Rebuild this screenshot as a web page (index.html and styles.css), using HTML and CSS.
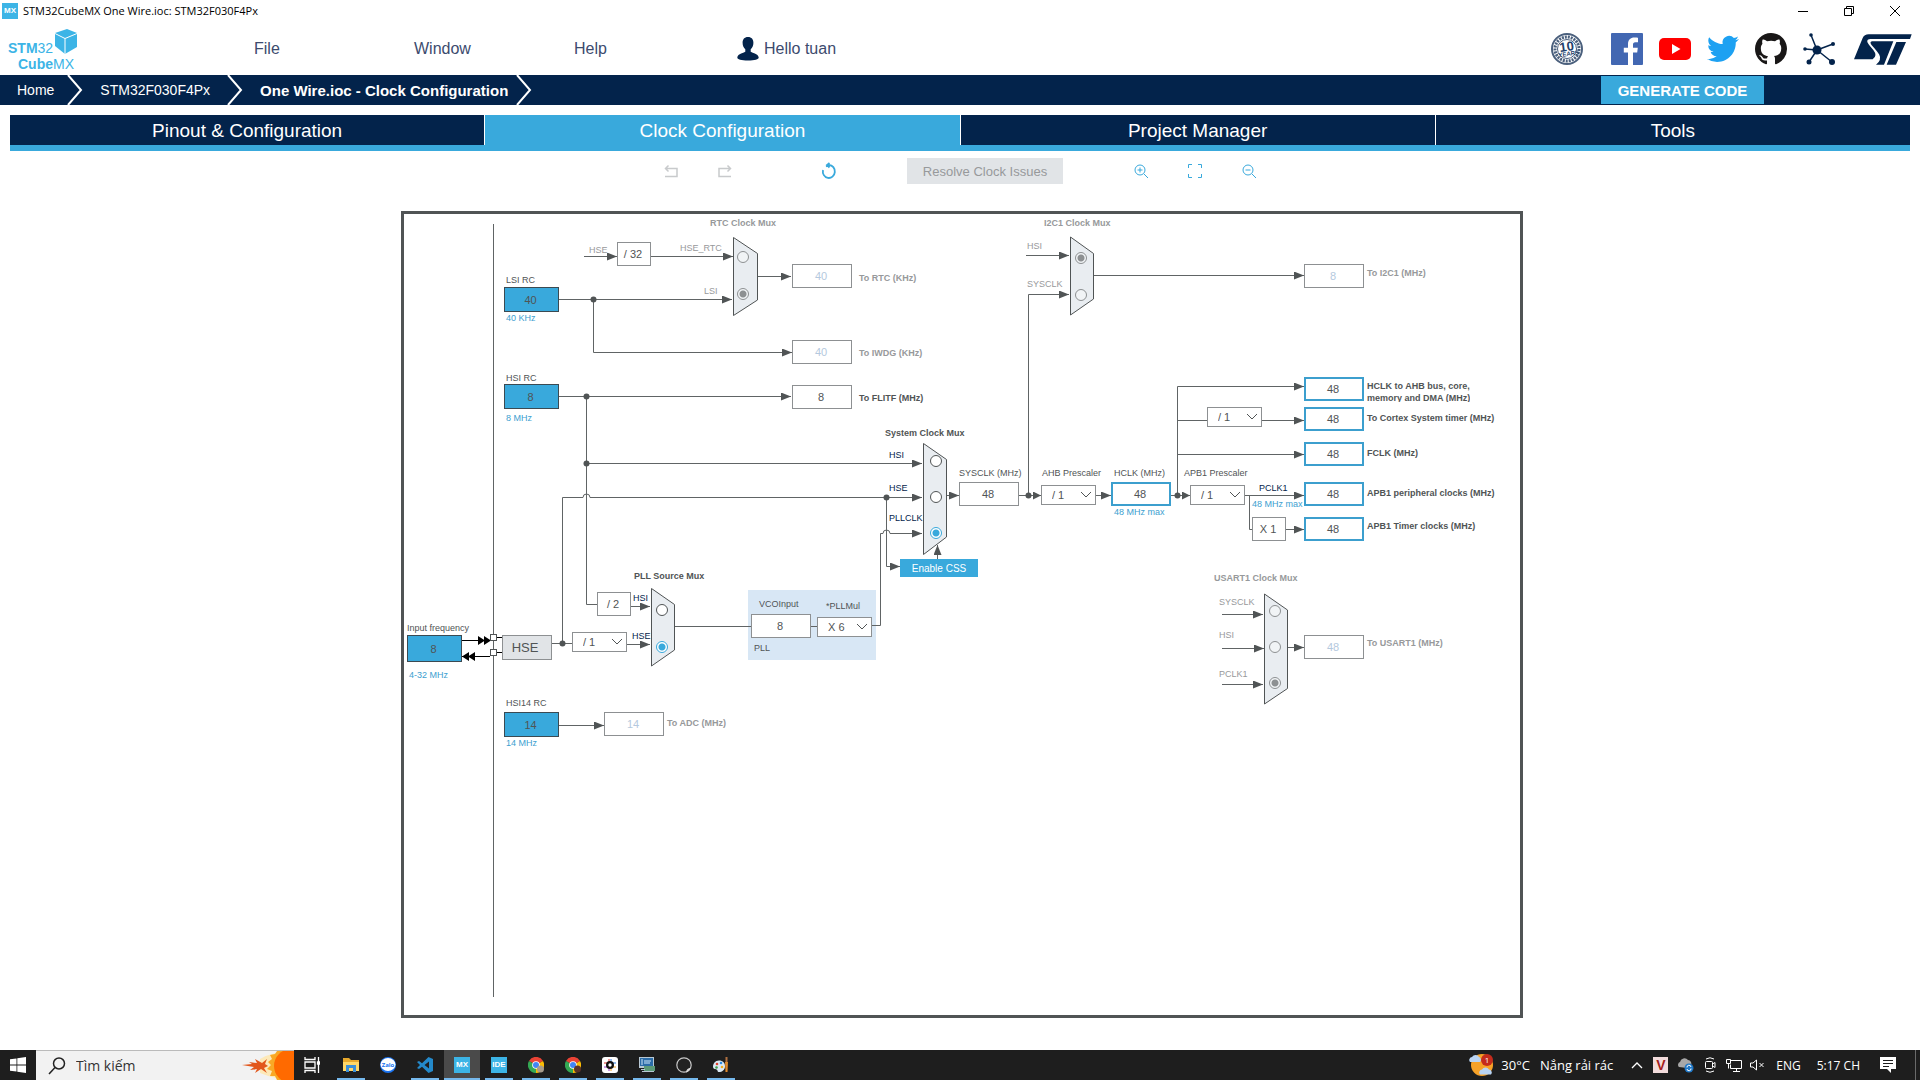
FILE: index.html
```html
<!DOCTYPE html>
<html lang="en">
<head>
<meta charset="utf-8">
<meta name="viewport" content="width=device-width, initial-scale=1">
<title>STM32CubeMX One Wire.ioc: STM32F030F4Px</title>
<link rel="stylesheet" href="styles.css">
</head>
<body>
<div class="titlebar">
  <span class="mx-badge">MX</span>
  <span class="window-name">STM32CubeMX One Wire.ioc: STM32F030F4Px</span>
  <div class="window-controls">
    <button aria-label="Minimize"><svg width="12" height="12" viewBox="0 0 12 12"><path d="M1 6.500H11"/></svg></button>
    <button aria-label="Restore"><svg width="12" height="12" viewBox="0 0 12 12"><path d="M1.500 3.500h7v7h-7zM3.500 3.500v-2h7v7h-2"/></svg></button>
    <button aria-label="Close"><svg width="12" height="12" viewBox="0 0 12 12"><path d="M1 1l10 10M11 1L1 11"/></svg></button>
  </div>
</div>

<header class="header">
  <div class="logo" aria-label="STM32 CubeMX">
    <span class="logo-top"><b>STM</b>32</span>
    <span class="logo-bottom"><b>Cube</b>MX</span>
    <svg class="logo-cube" width="24" height="26" viewBox="0 0 24 26"><path fill="#3cb4e6" d="M13 0l10 4v14L11 25 1 17V4z"/><path fill="none" stroke="#fff" d="M1 4.500l10 5 12-5M11 9.500V25"/></svg>
  </div>
  <nav class="menu">
    <a href="#file">File</a>
    <a href="#window">Window</a>
    <a href="#help">Help</a>
    <a href="#account" class="account"><svg width="22" height="24" viewBox="0 0 22 24"><path fill="#03234b" d="M11 0c3.600 0 5.400 2.400 5.400 5.800 0 2.700-1 5-2.700 6.500v2.400c.6 1 7.800 1.600 8 5.800 0 2-4 3-10.700 3S.3 22.500.3 20.500c.2-4.200 7.400-4.800 8-5.800v-2.400C6.600 10.800 5.600 8.500 5.600 5.800 5.600 2.400 7.400 0 11 0z"/></svg>Hello tuan</a>
  </nav>
  <div class="links">
    <a href="#longevity" class="badge-link" aria-label="10 years longevity commitment"><svg width="32" height="32" viewBox="0 0 32 32"><circle cx="16" cy="16" r="15" fill="#fff" stroke="#4b607d" stroke-width="2"/><circle cx="16" cy="16" r="12" fill="none" stroke="#4b607d" stroke-width="3" stroke-dasharray="2 1"/><circle cx="16" cy="16" r="9.500" fill="#fff" stroke="#4b607d"/><text x="16" y="18" text-anchor="middle" font-size="13" font-weight="bold" fill="#23406a" transform="rotate(-8 16 16)">10</text><text x="17" y="23" text-anchor="middle" font-size="6" font-weight="bold" fill="#23406a" transform="rotate(-8 16 16)">YEARS</text></svg></a>
    <a href="#facebook" aria-label="Facebook"><svg width="32" height="32" viewBox="0 0 32 32"><rect width="32" height="32" rx="1" fill="#4267b2"/><path fill="#fff" d="M22 32V19.600h4.200l.6-4.900H22v-3.100c0-1.400.4-2.400 2.400-2.400H27V4.800c-.5-.1-2-.2-3.700-.2-3.700 0-6.300 2.300-6.300 6.500v3.600h-4.200v4.900H17V32z"/></svg></a>
    <a href="#youtube" aria-label="YouTube"><svg width="32" height="32" viewBox="0 0 32 32"><rect y="5" width="32" height="22" rx="5" fill="#f00"/><path fill="#fff" d="M13 11l8.500 5-8.500 5z"/></svg></a>
    <a href="#twitter" aria-label="Twitter"><svg width="32" height="32" viewBox="0 0 24 24"><path fill="#1da1f2" d="M23.953 4.570a10 10 0 01-2.825.775 4.958 4.958 0 002.163-2.723c-.951.555-2.005.959-3.127 1.184a4.920 4.920 0 00-8.384 4.482C7.690 8.095 4.067 6.130 1.640 3.162a4.822 4.822 0 00-.666 2.475c0 1.710.870 3.213 2.188 4.096a4.904 4.904 0 01-2.228-.616v.060a4.923 4.923 0 003.946 4.827 4.996 4.996 0 01-2.212.085 4.936 4.936 0 004.604 3.417 9.867 9.867 0 01-6.102 2.105c-.390 0-.779-.023-1.170-.067a13.995 13.995 0 007.557 2.209c9.053 0 13.998-7.496 13.998-13.985 0-.210 0-.420-.015-.630A9.935 9.935 0 0024 4.590z"/></svg></a>
    <a href="#github" aria-label="GitHub"><svg width="32" height="32" viewBox="0 0 16 16"><path fill="#191717" d="M8 0C3.580 0 0 3.580 0 8c0 3.540 2.290 6.530 5.470 7.590.4.070.55-.17.55-.38 0-.19-.01-.82-.01-1.490-2.010.37-2.530-.49-2.690-.94-.09-.23-.48-.94-.82-1.130-.28-.15-.68-.52-.01-.53.63-.01 1.080.58 1.230.82.72 1.210 1.870.87 2.330.66.070-.52.28-.87.51-1.070-1.780-.2-3.640-.89-3.640-3.950 0-.87.310-1.590.82-2.150-.08-.2-.36-1.020.08-2.120 0 0 .67-.21 2.200.82.64-.18 1.320-.27 2-.27.68 0 1.360.09 2 .27 1.530-1.040 2.200-.82 2.200-.82.44 1.100.16 1.920.08 2.120.51.56.82 1.270.82 2.150 0 3.070-1.870 3.750-3.650 3.950.29.25.54.73.54 1.480 0 1.070-.01 1.930-.01 2.200 0 .21.15.46.55.38A8.013 8.013 0 0016 8c0-4.420-3.580-8-8-8z"/></svg></a>
    <a href="#community" aria-label="Community"><svg width="32" height="32" viewBox="0 0 32 32"><g stroke="#03234b" stroke-width="1.500"><path d="M14 17L8 2M14 17l16-6M14 17L2 16M14 17L6 29M14 17l15 12"/></g><g fill="#03234b"><circle cx="14" cy="17" r="4.500"/><circle cx="8" cy="2" r="1.800"/><circle cx="30" cy="11" r="2"/><circle cx="2" cy="16" r="1.800"/><circle cx="6" cy="29" r="2.500"/><circle cx="29" cy="29" r="3"/></g></svg></a>
    <a href="#st" class="st" aria-label="STMicroelectronics"><svg width="58" height="31" viewBox="0 0 174 93"><path fill="#03234b" d="M0 76L26 12Q31 1 44 1H173L168 15H50Q38 15 40 24Q42 30 58 48Q72 66 56 76ZM54 22H118L90 92H66Q84 78 76 62Q70 52 52 32Q46 24 54 22ZM127 24H156L126 92H98Z"/></svg></a>
  </div>
</header>

<div class="crumbs">
  <a href="#home" class="crumb">Home</a>
  <svg class="sep" width="16" height="30" viewBox="0 0 16 30"><path d="M1 0l13 15L1 30"/></svg>
  <a href="#mcu" class="crumb crumb-mcu">STM32F030F4Px</a>
  <svg class="sep sep-mcu" width="16" height="30" viewBox="0 0 16 30"><path d="M1 0l13 15L1 30"/></svg>
  <a href="#clock" class="crumb crumb-current">One Wire.ioc - Clock Configuration</a>
  <svg class="sep sep-current" width="16" height="30" viewBox="0 0 16 30"><path d="M1 0l13 15L1 30"/></svg>
  <button class="generate">GENERATE CODE</button>
</div>

<nav class="tabs">
  <a href="#pinout">Pinout &amp; Configuration</a>
  <a href="#clock" class="active">Clock Configuration</a>
  <a href="#project">Project Manager</a>
  <a href="#tools">Tools</a>
</nav>

<div class="toolbar">
  <button class="tool off" aria-label="Undo"><svg width="14" height="14" viewBox="0 0 14 14"><path stroke-width="1.500" d="M1 12.500h12v-8H2M4.500 1.500l-3 3 3 3"/></svg></button>
  <button class="tool off redo" aria-label="Redo"><svg width="14" height="14" viewBox="0 0 14 14"><path stroke-width="1.500" d="M13 12.500H1v-8h11M9.500 1.500l3 3-3 3"/></svg></button>
  <button class="tool" aria-label="Reset"><svg width="14" height="16" viewBox="0 0 14 16"><path stroke-width="1.800" d="M1 7a6 6.500 0 1 0 6-5L4 3.500M7.500 0L5 2l2.500 2.500"/></svg></button>
  <button class="resolve">Resolve Clock Issues</button>
  <button class="tool" aria-label="Zoom in"><svg width="14" height="14" viewBox="0 0 14 14"><circle cx="6" cy="6" r="5"/><path d="M10 10l4 4M3.500 6h5M6 3.500v5"/></svg></button>
  <button class="tool" aria-label="Fit to window"><svg width="14" height="14" viewBox="0 0 14 14"><path d="M.5 4V.5H4M10 .5h3.500V4M13.500 10v3.500H10M4 13.500H.5V10"/></svg></button>
  <button class="tool" aria-label="Zoom out"><svg width="14" height="14" viewBox="0 0 14 14"><circle cx="6" cy="6" r="5"/><path d="M10 10l4 4M3.500 6h5"/></svg></button>
</div>

<main class="stage">
<div class="board">
  <svg class="wires" width="1124" height="810" viewBox="0 0 1124 810">
    <defs>
      <marker id="tip" markerUnits="userSpaceOnUse" markerWidth="10" markerHeight="8" refX="10" refY="4" orient="auto"><path d="M0 0l10 4-10 4z" fill="#505455"/></marker>
      <marker id="tip-short" markerUnits="userSpaceOnUse" markerWidth="8" markerHeight="8" refX="8" refY="4" orient="auto"><path d="M0 0l8 4-8 4z" fill="#505455"/></marker>
    </defs>
    <rect x="2.500" y="2.500" width="1119" height="804" fill="none" stroke="#505455" stroke-width="3"/>
    <rect x="348" y="380" width="128" height="70" fill="#d8e7f5"/>
    <g class="wire">
      <path d="M93.500 14V787"/>
      <path class="arrow" d="M184 46.500H217"/>
      <path class="arrow" d="M251 46.500H333"/>
      <path class="arrow" d="M159 89.500H332"/>
      <path class="arrow" d="M193.500 89.500V142.500H392"/>
      <path class="arrow" d="M357 66.500H391"/>
      <path class="arrow" d="M159 186.500H391"/>
      <path class="arrow" d="M186.500 253.500H522"/>
      <path d="M186.500 186V394.500H197"/>
      <path class="arrow" d="M162.500 433.500V287.500H183a3 3 0 0 1 7 0H522"/>
      <path class="arrow" d="M486.500 287.500V356.500H500"/>
      <path class="arrow" d="M472 415.500H480.500V323.500H483a3 3 0 0 1 7 0H522"/>
      <path class="arrow" d="M537.500 349V335"/>
      <path class="arrow" d="M547 285.500H559"/>
      <path class="arrow short" d="M619 285.500H641"/>
      <path class="arrow" d="M628.500 285V84.500H669"/>
      <path class="arrow" d="M626 45.500H669"/>
      <path class="arrow" d="M693 65.500H904"/>
      <path class="arrow" d="M696 285.500H711"/>
      <path class="arrow short" d="M771 285.500H790"/>
      <path class="arrow" d="M777.500 285V176.500H904"/>
      <path class="arrow" d="M777 210.500H904"/>
      <path class="arrow" d="M777 244.500H904"/>
      <path class="arrow" d="M845 285.500H904"/>
      <path d="M849.500 285V319.500H852"/>
      <path class="arrow" d="M886 319.500H904"/>
      <path class="arrow" d="M822 404.500H863"/>
      <path class="arrow" d="M822 438.500H864"/>
      <path class="arrow" d="M822 474.500H863"/>
      <path class="arrow" d="M888 437.500H904"/>
      <path class="arrow" d="M231 396.500H250"/>
      <path class="arrow" d="M227 434.500H250"/>
      <path d="M152 433.500H172"/>
      <path d="M275 416.500H351M411 416.500H417"/>
      <path class="arrow" d="M159 515.500H204"/>
    </g>
    <g fill="none" stroke="#000"><path d="M62 430.500H90M62 446.500H90M97 427.500H102M97 442.500H102"/></g>
    <path fill="#000" d="M78 426l7 4.500-7 4.500zM84 426l7 4.500-7 4.500zM75 442l-7 4.500 7 4.500zM69 442l-7 4.500 7 4.500z"/>
    <g fill="#fff" stroke="#505455"><rect x="90.500" y="424.500" width="6" height="6"/><rect x="90.500" y="439.500" width="6" height="6"/></g>
    <g fill="#505455">
      <circle cx="193.500" cy="89.500" r="3"/><circle cx="186.500" cy="186.500" r="3"/><circle cx="186.500" cy="253.500" r="3"/><circle cx="486.500" cy="287.500" r="3"/><circle cx="628.500" cy="285.500" r="3"/><circle cx="777.500" cy="285.500" r="3"/><circle cx="162.500" cy="433.500" r="3"/>
    </g>
    <g fill="#e9edf1" stroke="#505455">
      <path d="M333.500 27.500L357.500 43.500V90L333.500 105.500z"/>
      <path d="M670.500 27L693.500 43.500V89L670.500 105z"/>
      <path d="M523.500 233.500L546.500 249.500V327L523.500 344.500z"/>
      <path d="M251.500 378.500L274.500 394.500V440L251.500 456z"/>
      <path d="M864.500 384L887.500 400V478.500L864.500 494z"/>
    </g>
  </svg>

  <h2 class="lbl head mute at-rtc-title">RTC Clock Mux</h2>
  <span class="lbl mute at-rtc-hse0">HSE</span>
  <output class="box div32">/ 32</output>
  <label class="lbl mute at-rtc-hse" for="rtc1">HSE_RTC</label>
  <label class="lbl mute at-rtc-lsi" for="rtc2">LSI</label>
  <div class="mux mux2 off at-rtc-mux"><input type="radio" name="rtc" id="rtc1"><input type="radio" name="rtc" id="rtc2" checked></div>
  <input class="box out none at-rtc" id="rtc" value="40" readonly><label class="lbl head mute at-rtc-l" for="rtc">To RTC (KHz)</label>

  <label class="lbl at-lsi-l" for="lsi">LSI RC</label><input class="box src at-lsi" id="lsi" value="40" readonly><span class="lbl hint at-lsi-h">40 KHz</span>
  <input class="box out none at-iwdg" id="iwdg" value="40" readonly><label class="lbl head mute at-iwdg-l" for="iwdg">To IWDG (KHz)</label>
  <label class="lbl at-hsi-l" for="hsi">HSI RC</label><input class="box src at-hsi" id="hsi" value="8" readonly><span class="lbl hint at-hsi-h">8 MHz</span>
  <input class="box out at-flitf" id="flitf" value="8" readonly><label class="lbl head at-flitf-l" for="flitf">To FLITF (MHz)</label>

  <h2 class="lbl head at-sys-title">System Clock Mux</h2>
  <label class="lbl navy at-sys-hsi" for="sys1">HSI</label>
  <label class="lbl navy at-sys-hse" for="sys2">HSE</label>
  <label class="lbl navy at-sys-pll" for="sys3">PLLCLK</label>
  <div class="mux mux3 at-sys-mux"><input type="radio" name="sys" id="sys1"><input type="radio" name="sys" id="sys2"><input type="radio" name="sys" id="sys3" checked></div>
  <button class="css-btn">Enable CSS</button>
  <label class="lbl at-sysclk-l" for="sysclk">SYSCLK (MHz)</label><input class="box out at-sysclk" id="sysclk" value="48" readonly>
  <label class="lbl at-ahb-l" for="ahb">AHB Prescaler</label><select class="pick at-ahb" id="ahb"><option>/ 1</option></select>
  <label class="lbl at-hclk-l" for="hclk">HCLK (MHz)</label><input class="box out edit at-hclk" id="hclk" value="48"><span class="lbl hint at-hclk-h">48 MHz max</span>
  <label class="lbl at-apb-l" for="apb">APB1 Prescaler</label><select class="pick at-apb" id="apb"><option>/ 1</option></select>
  <span class="lbl navy at-pclk">PCLK1</span><span class="lbl hint at-pclk-h">48 MHz max</span>
  <output class="box mul1">X 1</output>

  <input class="box out edit at-o1" id="o1" value="48"><label class="lbl head two at-o1-l" for="o1">HCLK to AHB bus, core,<br>memory and DMA (MHz)</label>
  <select class="pick at-cortex" aria-label="Cortex prescaler"><option>/ 1</option></select>
  <input class="box out edit at-o2" id="o2" value="48"><label class="lbl head at-o2-l" for="o2">To Cortex System timer (MHz)</label>
  <input class="box out edit at-o3" id="o3" value="48"><label class="lbl head at-o3-l" for="o3">FCLK (MHz)</label>
  <input class="box out edit at-o4" id="o4" value="48"><label class="lbl head at-o4-l" for="o4">APB1 peripheral clocks (MHz)</label>
  <input class="box out edit at-o5" id="o5" value="48"><label class="lbl head at-o5-l" for="o5">APB1 Timer clocks (MHz)</label>

  <h2 class="lbl head mute at-i2c-title">I2C1 Clock Mux</h2>
  <label class="lbl mute at-i2c-hsi" for="i2c1">HSI</label>
  <label class="lbl mute at-i2c-sys" for="i2c2">SYSCLK</label>
  <div class="mux mux2 off at-i2c-mux"><input type="radio" name="i2c" id="i2c1" checked><input type="radio" name="i2c" id="i2c2"></div>
  <input class="box out none at-i2c" id="i2c" value="8" readonly><label class="lbl head mute at-i2c-l" for="i2c">To I2C1 (MHz)</label>

  <h2 class="lbl head mute at-us-title">USART1 Clock Mux</h2>
  <label class="lbl mute at-us-sys" for="us1">SYSCLK</label>
  <label class="lbl mute at-us-hsi" for="us2">HSI</label>
  <label class="lbl mute at-us-pclk" for="us3">PCLK1</label>
  <div class="mux mux3 off at-us-mux"><input type="radio" name="us" id="us1"><input type="radio" name="us" id="us2"><input type="radio" name="us" id="us3" checked></div>
  <input class="box out none at-us" id="us" value="48" readonly><label class="lbl head mute at-us-l" for="us">To USART1 (MHz)</label>

  <h2 class="lbl head at-pll-title">PLL Source Mux</h2>
  <output class="box div2">/ 2</output>
  <label class="lbl navy at-pll-hsi" for="pll1">HSI</label>
  <label class="lbl navy at-pll-hse" for="pll2">HSE</label>
  <select class="pick at-prediv" aria-label="HSE divider"><option>/ 1</option></select>
  <div class="mux mux2 at-pll-mux"><input type="radio" name="pll" id="pll1"><input type="radio" name="pll" id="pll2" checked></div>
  <label class="lbl at-vco-l" for="vco">VCOInput</label><input class="box out at-vco" id="vco" value="8" readonly>
  <label class="lbl at-mul-l" for="mul">*PLLMul</label><select class="pick at-mul" id="mul"><option>X 6</option></select>
  <span class="lbl at-pll">PLL</span>

  <label class="lbl at-in-l" for="inp">Input frequency</label><input class="box src in" id="inp" value="8"><span class="lbl hint at-in-h">4-32 MHz</span>
  <button class="hse">HSE</button>
  <label class="lbl at-h14-l" for="h14">HSI14 RC</label><input class="box src at-h14" id="h14" value="14" readonly><span class="lbl hint at-h14-h">14 MHz</span>
  <input class="box out none at-adc" id="adc" value="14" readonly><label class="lbl head mute at-adc-l" for="adc">To ADC (MHz)</label>
</div>
</main>

<footer class="taskbar">
  <button class="start" aria-label="Start"><svg width="16" height="16" viewBox="0 0 16 16"><path fill="#fff" d="M0 2.300L6.500 1.400v6.200H0zM7.300 1.300L16 0v7.600H7.300zM0 8.400h6.500v6.200L0 13.700zM7.300 8.400H16V16l-8.700-1.300z"/></svg></button>
  <div class="search">
    <svg width="18" height="18" viewBox="0 0 18 18" fill="none" stroke="#222" stroke-width="1.500"><circle cx="11" cy="6.500" r="5.500"/><path d="M7 10.500L1 17"/></svg>
    <input type="text" placeholder="Tìm kiếm" aria-label="Tìm kiếm">
    <svg class="sun" width="54" height="29" viewBox="0 0 54 29"><path fill="#fde9b8" d="M20 8q14-8 34-8v29Q34 28 20 22z"/><path fill="#e2571c" d="M2 14l10-1-3-2 8 1-2-4 7 4 5-4-2 5 3 2-4 2 3 5-6-4-6 4 2-4-7 1 4-3z"/><path fill="#f9a825" d="M54 0H37l-2 3-5 1 2 4-4 3 3 3-4 4 5 2-2 5 5 0 2 4H54z"/><circle cx="51" cy="15" r="17" fill="#ff6a00"/></svg>
  </div>
  <div class="apps">
    <button class="app idle task-view" aria-label="Task view"><svg width="16" height="16" viewBox="0 0 16 16" fill="none" stroke="#fff" stroke-width="1.300"><path d="M1 0v2.500h10V0M1 16v-2.500h10V16M1 5h10v6H1zM14.500 0v16"/><path fill="#fff" d="M13.500 5h2v2h-2z"/></svg></button>
    <button class="app" aria-label="File Explorer"><svg width="16" height="16" viewBox="0 0 16 16"><path fill="#e8a92c" d="M0 1h6l2 2h8v11H0z"/><path fill="#ffd767" d="M0 5h16v9H0z"/><path fill="#3b8fd8" d="M3 8h10v7h-3v-4H6v4H3z"/></svg></button>
    <button class="app idle" aria-label="Zalo"><svg width="16" height="16" viewBox="0 0 16 16"><circle cx="8" cy="8" r="8" fill="#1a73f0"/><ellipse cx="8" cy="7.500" rx="7.500" ry="6.500" fill="#fff"/><text x="8" y="10" font-size="6" font-weight="bold" text-anchor="middle" fill="#1a73f0">Zalo</text></svg></button>
    <button class="app" aria-label="Visual Studio Code"><svg width="16" height="16" viewBox="0 0 16 16"><path fill="#2489ca" d="M11.500 0L16 2v12l-4.500 2L5 9.800 2 12l-2-1 3-3-3-3 2-1 3 2.200zM12 4.500L7.500 8 12 11.500z"/></svg></button>
    <button class="app current" aria-label="STM32CubeMX"><span class="tile">MX</span></button>
    <button class="app" aria-label="STM32CubeIDE"><span class="tile">IDE</span></button>
    <button class="app" aria-label="Chrome"><svg width="16" height="16" viewBox="0 0 16 16"><path fill="#ea4335" d="M8 8L1 4a8 8 0 0 1 14 0z"/><path fill="#34a853" d="M8 8v8A8 8 0 0 1 1 4z"/><path fill="#fbbc05" d="M8 8l7-4A8 8 0 0 1 8 16z"/><circle cx="8" cy="8" r="3.800" fill="#fff"/><circle cx="8" cy="8" r="3" fill="#4285f4"/><circle cx="12.500" cy="12" r="3.500" fill="#a89c8c"/></svg></button>
    <button class="app" aria-label="Chrome, second profile"><svg width="16" height="16" viewBox="0 0 16 16"><path fill="#ea4335" d="M8 8L1 4a8 8 0 0 1 14 0z"/><path fill="#34a853" d="M8 8v8A8 8 0 0 1 1 4z"/><path fill="#fbbc05" d="M8 8l7-4A8 8 0 0 1 8 16z"/><circle cx="8" cy="8" r="3.800" fill="#fff"/><circle cx="8" cy="8" r="3" fill="#4285f4"/><circle cx="12.500" cy="12" r="3.500" fill="#5a3328"/></svg></button>
    <button class="app" aria-label="Circuit designer"><svg width="16" height="16" viewBox="0 0 16 16"><rect width="16" height="16" rx="3" fill="#fff"/><path stroke="#e0312c" d="M2 6h3M7 2v3"/><path stroke="#2b7de0" d="M11 6h3M9 2v3"/><path stroke="#9a35c8" d="M2 10h3M7 11v3"/><path stroke="#f0a020" d="M11 10h3M9 11v3"/><circle cx="8" cy="8" r="4" fill="#111"/><circle cx="8" cy="8" r="1.700" fill="#fff"/></svg></button>
    <button class="app" aria-label="Device tool"><svg width="16" height="16" viewBox="0 0 16 16"><rect width="15" height="11" fill="#b8c8d4"/><rect x="1" y="1" width="13" height="8" fill="#2b6ca8"/><path stroke="#cfe6fa" d="M3 2v6M5 4h7M5 6h6"/><rect x="5" y="9" width="11" height="5" fill="#5c9a78"/><path stroke="#b8c8d4" d="M2 12.500h4M3 14.500h12"/></svg></button>
    <button class="app" aria-label="OBS"><svg width="16" height="16" viewBox="0 0 16 16"><circle cx="8" cy="8" r="7.200" fill="#222" stroke="#c8c8c8" stroke-width="1.200"/><path fill="#d8d8d8" d="M10 15.500q0-4 5-5-1 3.500-5 5z"/></svg></button>
    <button class="app" aria-label="Paint"><svg width="16" height="16" viewBox="0 0 16 16"><path fill="#dce9f4" d="M6 3.500c4 0 6 2.500 6 6s-3 5.500-6 5.500c-2 0-1-2-2.500-2.500S0 12 0 9.500s2-6 6-6z"/><circle cx="4" cy="7" r="1.300" fill="#e0432c"/><circle cx="8" cy="6" r="1.300" fill="#2c8be0"/><circle cx="9" cy="10" r="1.300" fill="#f0b020"/><circle cx="3.500" cy="10.500" r="1.300" fill="#3ea04a"/><path fill="#e08a2c" d="M12 5h3l-.5 10h-2z"/><path fill="#b07040" d="M12.500 0h2v5h-2z"/></svg></button>
  </div>
  <div class="tray">
    <button class="weather"><svg width="24" height="22" viewBox="0 0 24 22"><circle cx="13" cy="11" r="11" fill="#f7a228"/><path fill="#b9d3f2" d="M1 8a3 3 0 0 1 2-5 4 4 0 0 1 7 0 3 3 0 0 1 1 5zM11 20.500a3 3 0 0 1 2-5 4 4 0 0 1 7 0 3 3 0 0 1 2 5z"/><circle cx="18" cy="6" r="6" fill="#c42b1c"/><text x="18" y="9" font-size="8" text-anchor="middle" fill="#fff">1</text></svg><span>30°C</span><span>Nắng rải rác</span></button>
    <button class="caret" aria-label="Show hidden icons"><svg width="12" height="8" viewBox="0 0 12 8" fill="none" stroke="#fff" stroke-width="1.300"><path d="M1 7l5-5 5 5"/></svg></button>
    <span class="vkey">V</span>
    <svg width="17" height="16" viewBox="0 0 17 16"><path fill="#a8a8a8" d="M2 10a3 3 0 0 1 1-5 4.500 4.500 0 0 1 8-2 3.500 3.500 0 0 1 3 5l-4 3z"/><circle cx="12" cy="11" r="4.500" fill="#1f78c8"/><path d="M10 10.500a2 2 0 0 1 4-.5M14 11.500a2 2 0 0 1-4 .5" fill="none" stroke="#fff"/></svg>
    <svg class="cam" width="12" height="16" viewBox="0 0 12 16" fill="none" stroke="#fff"><rect x="1.500" y="4.500" width="7" height="7" rx="1"/><path d="M8.500 7l2.500-1.500v5L8.500 9M2 2q4-2.500 8 0M2 14q4 2.500 8 0"/></svg>
    <svg class="net" width="16" height="16" viewBox="0 0 16 16" fill="none" stroke="#fff"><path d="M4 3.500h11.500v8H4.500v-4M.5 2.500h4v4h-4zM2.500 6.500v5M7 14.500h7M10.500 12v2"/></svg>
    <svg width="15" height="14" viewBox="0 0 15 14" fill="none" stroke="#fff"><path d="M.5 5v4h2.500l3.500 3V2L3 5zM9.500 5l4 4M13.500 5l-4 4"/></svg>
    <span class="lang">ENG</span>
    <span class="clock">5:17 CH</span>
    <button class="notes" aria-label="Notifications"><svg width="16" height="16" viewBox="0 0 16 16"><path fill="#fff" d="M0 0h16v12h-5v4l-4-4H0z"/><path stroke="#1e1e1e" d="M3 3.500h10M3 6.500h10M3 9.500h6"/></svg></button>
  </div>
  <button class="show-desktop" aria-label="Show desktop"></button>
</footer>
</body>
</html>
```
FILE: styles.css
```css
* { box-sizing: border-box; }
body {
  margin: 0;
  min-height: 100vh;
  display: flex;
  flex-direction: column;
  background: #fff;
  color: #505455;
  font-family: "Liberation Sans", Arial, sans-serif;
}
a { color: inherit; text-decoration: none; }
button { border: 0; padding: 0; background: none; color: inherit; font-family: inherit; cursor: pointer; }
svg { display: block; flex: none; }

/* Window title */
.titlebar {
  display: flex;
  align-items: center;
  height: 22px;
  padding-left: 2px;
  color: #000;
  font: 11px/22px "Open Sans", "Noto Sans", sans-serif;
}
.mx-badge, .tile {
  width: 16px;
  height: 16px;
  background: #3cb4e6;
  color: #fff;
  font: bold 8px/16px "Liberation Sans", sans-serif;
  text-align: center;
}
.window-name { margin-left: 5px; }
.window-controls { display: flex; gap: 34px; margin-left: auto; padding-right: 19px; }
.window-controls svg { fill: none; stroke: #000; }

/* Main header */
.header { display: flex; align-items: center; height: 53px; padding: 1px 8px 0; }
.logo {
  position: relative;
  width: 246px;
  height: 46px;
  padding-top: 14px;
  color: #3cb4e6;
  font-size: 14px;
  line-height: 16px;
}
.logo-top, .logo-bottom { display: block; }
.logo-bottom { padding-left: 10px; }
.logo-cube { position: absolute; left: 46px; top: 3px; }
.menu { display: grid; grid-template-columns: repeat(4, 160px); align-items: center; color: #3c4b6e; font-size: 16px; }
.account { display: flex; align-items: center; gap: 5px; padding-left: 3px; }
.links { display: flex; align-items: center; gap: 16px; margin-left: auto; }
.badge-link { margin-right: 12px; }
.st { padding-left: 3px; }

/* Breadcrumbs */
.crumbs { display: flex; align-items: center; height: 30px; padding-left: 17px; background: #03234b; color: #fff; font-size: 14px; }
.sep { fill: none; stroke: #fff; stroke-width: 2; margin-left: 13px; }
.sep-mcu { margin-left: 17px; }
.sep-current { margin-left: 8px; }
.crumb-mcu, .crumb-current { margin-left: 17px; }
.crumb-current { font-weight: bold; font-size: 15px; }
.generate { width: 163px; height: 28px; margin: 0 156px 0 auto; background: #39a9dc; font-size: 15px; font-weight: bold; }

/* Tabs */
.tabs { display: flex; margin: 10px 10px 0; border-bottom: 6px solid #39a9dc; }
.tabs a { flex: 1; padding-top: 2px; background: #03234b; color: #fff; font-size: 19px; line-height: 28px; text-align: center; }
.tabs a + a { border-left: 1px solid #fff; }
.tabs .active { background: #39a9dc; }

/* Toolbar */
.toolbar { display: flex; justify-content: center; align-items: center; gap: 40px; padding: 7px 0 26px; }
.tool svg { fill: none; stroke: #39a9dc; overflow: visible; }
.tool.off svg { stroke: #c8cacc; }
.redo { margin-right: 50px; }
.resolve { width: 156px; height: 26px; margin: 0 31px; background: #e1e4e7; color: #97999b; font-size: 13px; }

/* Clock tree canvas */
.stage { flex: 1; display: flex; justify-content: safe center; padding-left: 4px; overflow: auto; }
.board { position: relative; flex: none; width: 1124px; height: 810px; }
.wires { position: absolute; left: 0; top: 0; }
.wire { fill: none; stroke: #606465; }
.arrow { marker-end: url(#tip); }
.arrow.short { marker-end: url(#tip-short); }
.lbl { position: absolute; margin: 0; font-size: 9px; font-weight: normal; line-height: 12px; white-space: nowrap; }
.head { font-weight: bold; }
.mute { color: #97999b; }
.hint { color: #3ca0d0; }
.navy { color: #03234b; }
.two { height: 22px; overflow: hidden; }
.box {
  position: absolute;
  margin: 0;
  padding: 0 2px 0 0;
  border: 1px solid #8d9092;
  border-radius: 0;
  background: #fff;
  color: #505455;
  font: 11px/22px "Liberation Sans", sans-serif;
  text-align: center;
}
.out { width: 60px; height: 24px; }
.src { width: 55px; height: 25px; border-color: #3b4a52; background: #39a9dc; }
.edit { border: 2px solid #3c9fce; }
.none { color: #b4c9de; }
.pick {
  position: absolute;
  width: 55px;
  height: 20px;
  padding: 0 0 0 10px;
  border: 1px solid #8d9092;
  border-radius: 0;
  appearance: none;
  background: #fff url("data:image/svg+xml,%3Csvg xmlns='http://www.w3.org/2000/svg' width='10' height='6'%3E%3Cpath d='M0 0l5 5 5-5' fill='none' stroke='%23505455'/%3E%3C/svg%3E") no-repeat right 4px center;
  color: #505455;
  font: 11px/18px "Liberation Sans", sans-serif;
}
.mux { position: absolute; display: grid; gap: 24px; }
.mux2 { gap: 25px; }
.mux input {
  appearance: none;
  width: 12px;
  height: 12px;
  margin: 0;
  border: 1px solid #505455;
  border-radius: 50%;
  background: #fff;
}
.mux input:checked { border-color: #39a9dc; background: radial-gradient(circle, #39a9dc 3px, #fff 4px); }
.mux.off input { border-color: #8d9092; background: #f1f4f6; }
.mux.off input:checked { background: radial-gradient(circle, #8d9092 3px, #f1f4f6 4px); }
.div32 { left: 217px; top: 32px; width: 34px; height: 24px; }
.div2 { left: 197px; top: 382px; width: 34px; height: 24px; }
.mul1 { left: 852px; top: 307px; width: 34px; height: 24px; }
.in { left: 7px; top: 425px; height: 27px; }
.hse { position: absolute; left: 102px; top: 425px; width: 50px; height: 25px; padding-right: 4px; border: 1px solid #8d9092; background: #e1e4e7; font-size: 13px; }
.css-btn { position: absolute; left: 500px; top: 349px; width: 78px; height: 18px; background: #39a9dc; color: #fff; font-size: 10px; }

/* Node positions on the canvas */
.at-rtc-title { left: 310px; top: 7px; }
.at-rtc-hse0 { left: 189px; top: 34px; }
.at-rtc-hse { left: 280px; top: 32px; }
.at-rtc-lsi { left: 304px; top: 75px; }
.at-rtc-mux { left: 337px; top: 41px; }
.at-rtc { left: 392px; top: 54px; }
.at-rtc-l { left: 459px; top: 62px; }
.at-lsi-l { left: 106px; top: 64px; }
.at-lsi { left: 104px; top: 77px; }
.at-lsi-h { left: 106px; top: 102px; }
.at-iwdg { left: 392px; top: 130px; }
.at-iwdg-l { left: 459px; top: 137px; }
.at-hsi-l { left: 106px; top: 162px; }
.at-hsi { left: 104px; top: 174px; }
.at-hsi-h { left: 106px; top: 202px; }
.at-flitf { left: 392px; top: 175px; }
.at-flitf-l { left: 459px; top: 182px; }
.at-sys-title { left: 485px; top: 217px; }
.at-sys-hsi { left: 489px; top: 239px; }
.at-sys-hse { left: 489px; top: 272px; }
.at-sys-pll { left: 489px; top: 302px; }
.at-sys-mux { left: 530px; top: 245px; }
.at-sysclk-l { left: 559px; top: 257px; }
.at-sysclk { left: 559px; top: 272px; }
.at-ahb-l { left: 642px; top: 257px; }
.at-ahb { left: 641px; top: 275px; }
.at-hclk-l { left: 714px; top: 257px; }
.at-hclk { left: 711px; top: 272px; }
.at-hclk-h { left: 714px; top: 296px; }
.at-apb-l { left: 784px; top: 257px; }
.at-apb { left: 790px; top: 275px; }
.at-pclk { left: 859px; top: 272px; }
.at-pclk-h { left: 852px; top: 288px; }
.at-cortex { left: 807px; top: 197px; }
.at-o1 { left: 904px; top: 167px; }
.at-o1-l { left: 967px; top: 170px; }
.at-o2 { left: 904px; top: 197px; }
.at-o2-l { left: 967px; top: 202px; }
.at-o3 { left: 904px; top: 232px; }
.at-o3-l { left: 967px; top: 237px; }
.at-o4 { left: 904px; top: 272px; }
.at-o4-l { left: 967px; top: 277px; }
.at-o5 { left: 904px; top: 307px; }
.at-o5-l { left: 967px; top: 310px; }
.at-i2c-title { left: 644px; top: 7px; }
.at-i2c-hsi { left: 627px; top: 30px; }
.at-i2c-sys { left: 627px; top: 68px; }
.at-i2c-mux { left: 675px; top: 42px; }
.at-i2c { left: 904px; top: 54px; }
.at-i2c-l { left: 967px; top: 57px; }
.at-us-title { left: 814px; top: 362px; }
.at-us-sys { left: 819px; top: 386px; }
.at-us-hsi { left: 819px; top: 419px; }
.at-us-pclk { left: 819px; top: 458px; }
.at-us-mux { left: 869px; top: 395px; }
.at-us { left: 904px; top: 425px; }
.at-us-l { left: 967px; top: 427px; }
.at-pll-title { left: 234px; top: 360px; }
.at-pll-hsi { left: 233px; top: 382px; }
.at-pll-hse { left: 232px; top: 420px; }
.at-prediv { left: 172px; top: 422px; }
.at-pll-mux { left: 256px; top: 394px; }
.at-vco-l { left: 359px; top: 388px; }
.at-vco { left: 351px; top: 404px; }
.at-mul-l { left: 426px; top: 390px; }
.at-mul { left: 417px; top: 407px; }
.at-pll { left: 354px; top: 432px; }
.at-in-l { left: 7px; top: 412px; }
.at-in-h { left: 9px; top: 459px; }
.at-h14-l { left: 106px; top: 487px; }
.at-h14 { left: 104px; top: 502px; }
.at-h14-h { left: 106px; top: 527px; }
.at-adc { left: 204px; top: 502px; }
.at-adc-l { left: 267px; top: 507px; }

/* Taskbar */
.taskbar { display: flex; height: 30px; background: #1e1e1e; color: #fff; font-family: "Open Sans", "Noto Sans", sans-serif; }
.start { width: 36px; display: grid; place-items: center; }
.search { display: flex; align-items: center; width: 258px; padding-left: 12px; border-top: 1px solid #bbb; background: #f2f2f2; }
.search input { flex: 1; min-width: 0; margin: 0; padding: 0 0 0 10px; border: 0; background: none; font: 14px/28px "Open Sans", "Noto Sans", sans-serif; }
.search input::placeholder { color: #333; opacity: 1; }
.apps { display: flex; gap: 1px; }
.app { display: grid; place-items: center; width: 36px; padding: 2px 0 0; border-bottom: 2px solid transparent; background: linear-gradient(#76b9ed, #76b9ed) no-repeat center bottom / 28px 2px border-box; }
.app.idle { background: none; }
.app.current { border-bottom-color: #76b9ed; background: #4a4a4a; }
.task-view { margin-right: 2px; }
.tray { display: flex; align-items: center; margin-left: auto; padding-right: 19px; font-size: 12px; }
.weather { display: flex; align-items: center; gap: 10px; font-size: 13px; margin-right: 18px; }
.weather svg { margin-right: -2px; }
.caret { margin-right: 10px; }
.vkey { width: 15px; margin-right: 9px; background: #f3dcdc; color: #a51c1c; font: bold 14px/16px "Liberation Sans", sans-serif; text-align: center; }
.cam { margin: 0 10px; }
.net { margin-right: 8px; }
.lang { margin-left: 11px; }
.clock { margin: 0 20px 0 16px; }
.show-desktop { width: 5px; border-left: 1px solid #6a6a6a; }
```
